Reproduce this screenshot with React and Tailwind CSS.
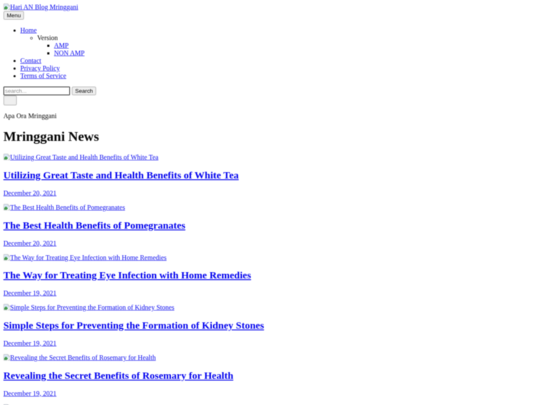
const posts = [
  { title: "Utilizing Great Taste and Health Benefits of White Tea", date: "December 20, 2021" },
  { title: "The Best Health Benefits of Pomegranates", date: "December 20, 2021" },
  { title: "The Way for Treating Eye Infection with Home Remedies", date: "December 19, 2021" },
  { title: "Simple Steps for Preventing the Formation of Kidney Stones", date: "December 19, 2021" },
  { title: "Revealing the Secret Benefits of Rosemary for Health", date: "December 19, 2021" },
];

const linkCls = "text-[#0000ee] underline";
const btnCls = "h-[21px] bg-[#efefef] border-2 border-[#c4c4c4] rounded-[4px] px-[6px] text-[13.33px] leading-[15px] font-['Liberation_Sans',sans-serif] text-black";

// chrome's broken image icon
const BrokenImage = () => (
  <svg width="16" height="16" viewBox="0 0 16 16" className="inline align-top">
    <path d="M1 1H11L15 5V15H1Z" fill="#dce8fa" stroke="#b0b0b0" />
    <path d="M11 1V5H15" fill="#f4f4f4" stroke="#b0b0b0" />
    <path d="M2 14V10L6 6L11 11L8 14Z" fill="#3f9a48" />
    <path d="M9 15L15 9" stroke="#fff" strokeWidth="2" />
  </svg>
);

const Post = ({ title, date }) => (
  <article>
    <a href="#" className={linkCls}>
      <BrokenImage />
      {title}
    </a>
    <h2 className="text-[24px] font-bold my-[19.92px] leading-[27px]">
      <a href="#" className={linkCls}>{title}</a>
    </h2>
    <p className="my-4">
      <a href="#" className={linkCls}>{date}</a>
    </p>
  </article>
);

export default function App() {
  return (
    <div className="h-[405px] w-[540px] overflow-hidden bg-white">
      {/* page is laid out at 1280 wide and shrunk as a whole */}
      <div className="w-[1280px] origin-top-left scale-[0.421875] will-change-transform">
        <div className="p-2 text-base leading-[18px] text-black font-['Liberation_Serif',serif] blur-[1px]">
          <header>
            <a href="#" className={linkCls}>
              <BrokenImage />
              Hari AN Blog Mringgani
            </a>
            <div className="flex">
              <button className={btnCls}>Menu</button>
            </div>
            <ul className="list-disc my-4 pl-10">
              <li><a href="#" className={linkCls}>Home</a>
                <ul className="list-[circle] pl-10">
                  <li>Version
                    <ul className="list-[square] pl-10">
                      <li><a href="#" className={linkCls}>AMP</a></li>
                      <li><a href="#" className={linkCls}>NON AMP</a></li>
                    </ul>
                  </li>
                </ul>
              </li>
              <li><a href="#" className={linkCls}>Contact</a></li>
              <li><a href="#" className={linkCls}>Privacy Policy</a></li>
              <li><a href="#" className={linkCls}>Terms of Service</a></li>
            </ul>
            <form className="flex items-center gap-[4px]">
              <input
                placeholder="search..."
                className="w-[158px] h-[21px] border-2 border-[#4a4a4a] rounded-[2px] px-[2px] text-[13.33px] font-['Liberation_Sans',sans-serif] placeholder:text-[#8a8a8a]"
              />
              <button className={btnCls}>Search</button>
            </form>
            <button className="block w-[32px] h-[24px] bg-[#efefef] border-2 border-[#c4c4c4] rounded-[4px]" />
            <p className="my-4">Apa Ora Mringgani</p>
            <h1 className="text-[32px] leading-[37px] font-bold my-[21.44px]">Mringgani News</h1>
          </header>
          <main>
            {posts.map((post) => (
              <Post key={post.title} {...post} />
            ))}
            <BrokenImage />
          </main>
        </div>
      </div>
    </div>
  );
}
